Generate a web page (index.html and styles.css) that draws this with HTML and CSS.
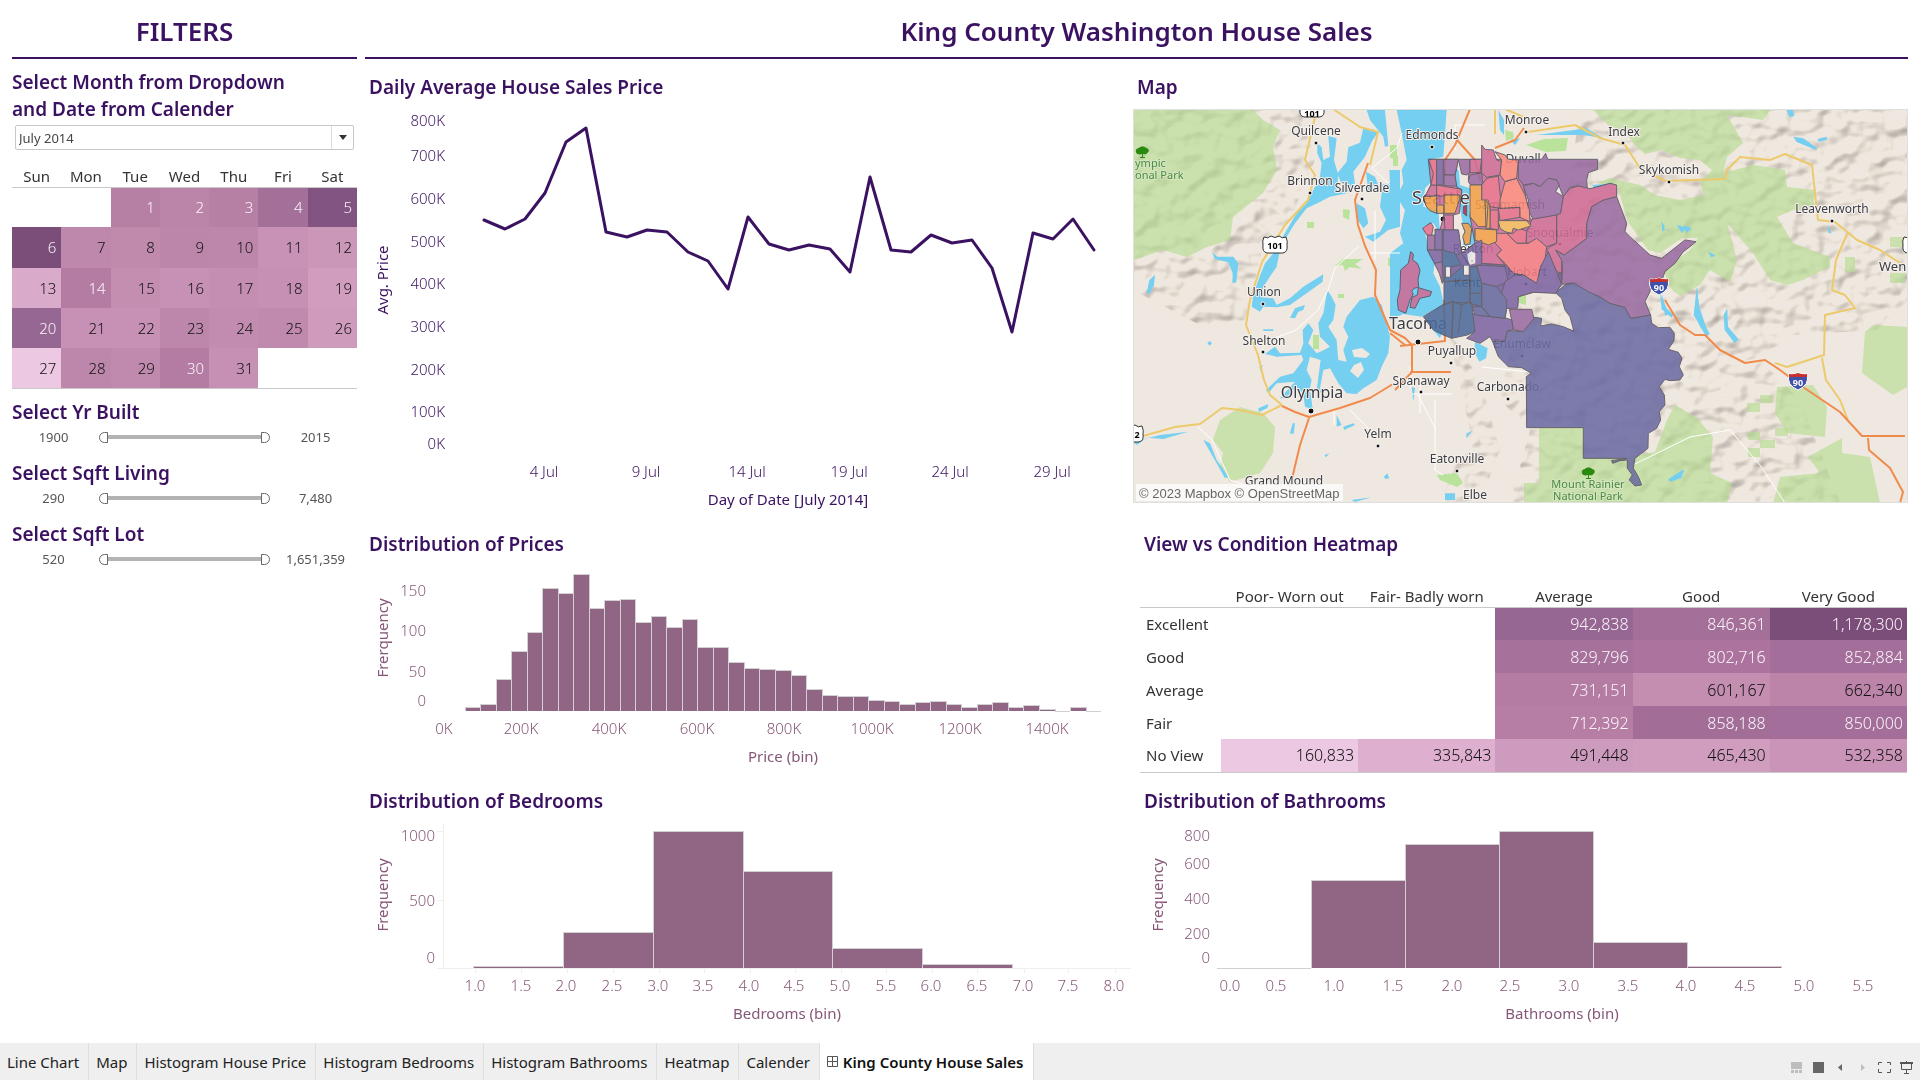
FILE: index.html
```html
<!DOCTYPE html>
<html lang="en">
<head>
<meta charset="utf-8">
<meta name="viewport" content="width=device-width, initial-scale=1">
<title>King County House Sales</title>
<link rel="stylesheet" href="styles.css">
</head>
<body>
<main class="dashboard">
  <aside class="filters">
    <h1 class="heading">FILTERS</h1>
    <label class="filter-title" for="month">Select Month from Dropdown<br>and Date from Calender</label>
    <div class="month-picker">
      <select id="month" class="month-select"><option>July 2014</option></select>
      <span class="month-arrow"><svg width="8" height="5" viewBox="0 0 8 5"><path d="M0 0h8L4 5z" fill="#333"/></svg></span>
    </div>
    <table class="calendar">
      <thead><tr><th>Sun</th><th>Mon</th><th>Tue</th><th>Wed</th><th>Thu</th><th>Fri</th><th>Sat</th></tr></thead>
      <tbody>
        <tr><td></td><td></td><td class="lt" style="background:#b67fa4">1</td><td class="lt" style="background:#bb85a9">2</td><td class="lt" style="background:#b67fa4">3</td><td class="lt" style="background:#a3709a">4</td><td class="lt" style="background:#825482">5</td></tr>
        <tr><td class="lt" style="background:#7b4d79">6</td><td style="background:#be88ac">7</td><td style="background:#c08aad">8</td><td style="background:#bc86aa">9</td><td style="background:#bd87ab">10</td><td style="background:#c892b6">11</td><td style="background:#cb97b9">12</td></tr>
        <tr><td style="background:#daaacb">13</td><td class="lt" style="background:#b47ca2">14</td><td style="background:#c48eb1">15</td><td style="background:#c791b5">16</td><td style="background:#c48eb2">17</td><td style="background:#c690b4">18</td><td style="background:#d09dbf">19</td></tr>
        <tr><td class="lt" style="background:#966793">20</td><td style="background:#c791b5">21</td><td style="background:#c791b5">22</td><td style="background:#bd87ab">23</td><td style="background:#c28cb0">24</td><td style="background:#c08aae">25</td><td style="background:#ce9bbd">26</td></tr>
        <tr><td style="background:#edc8e3">27</td><td style="background:#bd87ab">28</td><td style="background:#c08aae">29</td><td class="lt" style="background:#b47ca2">30</td><td style="background:#c690b4">31</td><td></td><td></td></tr>
      </tbody>
    </table>
    <section class="range">
      <h2 class="filter-title">Select Yr Built</h2>
      <div class="range-row"><span>1900</span><div class="slider"><input class="low" type="range" min="1900" max="2015" value="1900" aria-label="Earliest year built"><input class="high" type="range" min="1900" max="2015" value="2015" aria-label="Latest year built"></div><span>2015</span></div>
    </section>
    <section class="range">
      <h2 class="filter-title">Select Sqft Living</h2>
      <div class="range-row"><span>290</span><div class="slider"><input class="low" type="range" min="290" max="7480" value="290" aria-label="Smallest living area"><input class="high" type="range" min="290" max="7480" value="7480" aria-label="Largest living area"></div><span>7,480</span></div>
    </section>
    <section class="range">
      <h2 class="filter-title">Select Sqft Lot</h2>
      <div class="range-row"><span>520</span><div class="slider"><input class="low" type="range" min="520" max="1651359" value="520" aria-label="Smallest lot"><input class="high" type="range" min="520" max="1651359" value="1651359" aria-label="Largest lot"></div><span>1,651,359</span></div>
    </section>
  </aside>

  <div class="report">
    <h1 class="heading">King County Washington House Sales</h1>
    <div class="panels">
      <section>
        <h2 class="panel-title">Daily Average House Sales Price</h2>
        <svg class="chart line" viewBox="365 109 766 407" role="img" aria-label="Daily average house sales price">
          <g text-anchor="end"><text x="445" y="126">800K</text><text x="445" y="161">700K</text><text x="445" y="204">600K</text><text x="445" y="247">500K</text><text x="445" y="289">400K</text><text x="445" y="332">300K</text><text x="445" y="375">200K</text><text x="445" y="417">100K</text><text x="445" y="449">0K</text></g>
          <g text-anchor="middle"><text x="544" y="477">4 Jul</text><text x="646" y="477">9 Jul</text><text x="747" y="477">14 Jul</text><text x="849" y="477">19 Jul</text><text x="950" y="477">24 Jul</text><text x="1052" y="477">29 Jul</text>
          <text class="axis" x="788" y="505">Day of Date [July 2014]</text>
          <text class="axis" transform="translate(388 280) rotate(-90)">Avg. Price</text></g>
          <polyline fill="none" stroke="#3b1261" stroke-width="3" stroke-linejoin="round" stroke-linecap="round" points="484,220 505,229 525,219 545,193 566,142 586,128 606,232 627,237 647,230 667,232 688,252 708,261 728,289 748,217 769,244 789,250 809,245 830,249 850,272 870,177 891,250 911,252 931,235 952,243 972,240 992,268 1012,332 1033,233 1053,239 1073,219 1094,250"/>
        </svg>
      </section>

      <section>
        <h2 class="panel-title">Map</h2>
        <svg class="map" viewBox="1133 109 775 394" role="img" aria-label="House sales by zip code">
          <defs>
            <filter id="relief" x="0" y="0" width="1" height="1" color-interpolation-filters="sRGB">
              <feTurbulence type="fractalNoise" baseFrequency=".05 .06" numOctaves="2" seed="8" result="n"/>
              <feDiffuseLighting in="n" surfaceScale="6" diffuseConstant="1.2" lighting-color="#fffaf0"><feDistantLight azimuth="235" elevation="60"/></feDiffuseLighting>
              <feComposite in2="SourceAlpha" operator="in"/>
            </filter>
            <g id="tree"><path d="M-6 0c-1-3 2-4 3-4 1-2 6-2 7 0 3 0 4 4 1 5 0 2-3 1-4 1v3h2v1h-5v-1h2v-3c-3 1-6 0-6-2z" fill="#2a8a10"/></g>
            <g id="interstate"><path d="M-9-7q4 1 9-1 5 2 9 1 3 11-9 16-12-5-9-16z" fill="#3f51a8" stroke="#fff"/><path d="M-9-7q4 1 9-1 5 2 9 1v3H-9z" fill="#c9302c"/></g>
            <path id="us" d="M-11-8q4 2 7-1 4 3 8 0 3 3 7 1 2 5 1 8 1 7-4 8H-8q-5-1-4-8-1-4 1-8z" fill="#fff" stroke="#333"/>
          </defs>
          <rect x="1133" y="109" width="775" height="394" fill="#efe8e1"/>

          <g filter="url(#relief)" class="hills">
            <path d="M1133 109H1300L1315 160 1290 220 1262 250 1246 320 1200 325 1133 290z"/>
            <path d="M1580 109H1908V300L1880 330 1790 335 1760 360 1800 400 1840 503H1510L1530 430 1500 400 1520 300 1560 250z"/>
            <path d="M1448 330L1480 380 1500 450 1480 503H1440L1470 430z"/>
          </g>
          <g class="park">
            <path d="M1133 109H1252L1263 120 1280 130 1273 147 1277 170 1263 193 1233 217 1230 240 1207 247 1187 257 1163 250 1143 257 1133 260z"/>
            <path d="M1220 420L1240 407 1263 413 1275 427 1273 453 1260 473 1230 482 1220 467 1223 453 1213 440z"/>
            <path d="M1592 109H1771L1763 120 1727 115 1743 143 1727 157 1723 173 1753 165 1767 167 1785 170 1787 187 1815 190 1813 210 1793 210 1777 217 1793 243 1830 257 1830 267 1803 280 1787 285 1770 280 1753 253 1727 223 1737 260 1730 282 1710 270 1700 285 1680 296 1672 290 1663 270 1690 250 1698 238 1682 238 1660 253 1648 250 1628 222 1620 195 1617 185 1597 183 1610 178 1640 185 1655 195 1680 200 1704 195 1700 182 1712 170 1700 160 1680 158 1662 150 1645 154 1635 145 1625 132 1608 125z"/>
            <path d="M1539 428H1583V458H1623L1655 452 1667 420 1675 405 1697 418 1713 437 1710 473 1732 483 1727 503H1524V483H1539z"/>
            <path d="M1865 332L1873 325 1907 327V387L1893 395 1862 373zM1777 387L1813 385 1827 407 1825 437 1787 433 1775 413zM1808 457L1842 438V453L1870 457 1880 503H1773L1780 477 1820 473z"/>
            <path d="M1747 403h13v9h-13zM1760 395h13v8h-13zM1748 432h12v8h-12zM1760 440h15v8h-15zM1775 428h13v8h-13zM1748 448h12v9h-12zM1890 237h13v10h-13zM1845 257h10v15h-10zM1890 273h15v10h-15z"/>
          </g>
          <g fill="#b9e39b">
            <path d="M1390 145h7v13h-7zM1393 156h5v10h-5zM1343 209l7 1-1 10-6-3zM1307 222h7v6h-7zM1343 259h20l-8 5 7 5-12-2-5 4-2-6-8 1zM1388 258h6v8h-6zM1338 294h6v4h-6zM1313 335h6v14h-6zM1505 130l8 2 1 6-8 3zM1526 145l18-6 24-1-2 13-20 1zM1437 475l20-2 6 10-6 4-17-7zM1518 297l8-2v10l-7-2z"/>
          </g>

          <g fill="#75cff0">
            <g transform="translate(1130 60) scale(.3333)">
              <path d="M595 228L620 235 612 300 625 345 620 395 640 385 622 340 650 305 655 262 690 248 700 205 730 208 742 220 725 245 705 290 670 335 675 370 650 400 600 410 565 428 530 445 495 490 470 530 450 570 440 620 400 680 395 712 430 715 440 735 480 715 520 680 580 643 578 665 530 700 480 735 440 742 400 740 390 755 365 740 370 705 385 660 405 610 430 580 470 510 500 460 530 430 545 400 570 350 575 310 562 280 562 250 575 262 580 300 600 290z"/>
              <path d="M710 150H765L775 258 765 260 760 230 720 180zM708 335L735 350 745 375 780 370 778 330H810V500L775 510 730 545 705 530 750 515 768 480 750 440 755 400 735 390 715 395zM680 430L705 445 715 490 700 505 680 475zM247 577L262 590 310 590 325 610 322 640 318 668 307 668 308 640 295 607 255 598zM50 700L58 660 75 645 72 675 58 702z"/>
              <path d="M650 770L690 720 730 710 755 735 770 790 780 830 775 880 755 920 740 960 700 985 680 1002 650 1000 625 970 600 925 580 930 570 985 575 1000 560 990 572 900 540 890 530 930 545 960 540 985 548 1048 525 1040 520 1000 500 985 465 1015 450 1015 495 965 440 970 415 1000 408 990 450 950 490 940 520 900 515 885 440 890 405 882 435 860 450 880 510 878 520 850 518 810 535 790 550 810 535 850 560 880 582 870 600 860 570 830 565 790 580 760 592 690 605 710 617 735 610 780 595 800 620 840 625 900 650 905 640 870 655 830 640 800z"/>
              <path d="M495 745l30-10-5 15-15 5-10 20-15-2zM400 808h30v5h-30zM232 848l8-5 6 8-8 6zM388 920l10-5-5 22zM385 1045l30-13-3 12-25 12zM480 1120l8-30h7l-4 32zM620 1065l15 30-15 5zM640 1100l30-10 5 5-33 15zM583 1186l15-6-10 12zM762 1250l10-10 6 15-12 2zM665 1320l60-8-50 14z"/>
              <path d="M10 1145L90 1125 175 1115 100 1137 50 1133 20 1155zM220 1140l20 10 20 50 35 50-10 5-25-45z"/>
            </g>
            <g transform="translate(1390 100) scale(.3333)">
              <path d="M20 30H170L160 170 125 178 120 250 105 265 100 320 145 330 150 400 130 370 100 380 110 420 115 450 135 485 130 520 150 560 162 615 95 650 40 642 0 660V460L40 430 30 400 45 330 20 290 40 250 35 210 50 180 35 100z"/>
              <path d="M195 195l12 20 3 40 30 10-2 70 20 60-5 50-25 60-10-60 5-50-15-80-10-50z"/>
              <path d="M100 655l60 30-10 30zM255 725l38 20-5 30-20 10-15-30zM325 30l5 60 12 15v-45zM360 120l30-5-15 20zM440 105l150-20 50 30-60-10zM605 255l70-5-60 15zM815 365l10 25-8 5zM880 375l25 10-15 15zM955 455l20 12-12 5zM920 560l8 60 20 60-15 5-20-50zM815 580l18 65-8 2zM835 1138l45-30-8 25-30 12zM230 1000l18-8-20 22zM165 1180h30v20h-30zM65 860l10 5-5 40z"/>
            </g>
            <g transform="translate(1660 60) scale(.3333)">
              <path d="M380 150h18l5 18-15 3zM400 230l30 5 40 28v8l-60-25zM473 237l27-7v10l-25 5zM112 682l5 75 32 65-10 8-38-65zM202 745l2 55 32 38-12 12-30-40-3-45zM5 485l10 15-7 5zM50 495l30 8-15 15zM143 575l22 10-5 5zM0 700l20 45 20 20-5 8-30-25zM25 1260l20-15 27-15-8 25-38 8zM503 495l12 25-10-2z"/>
            </g>
          </g>
          <path d="M1352 350l10-2 8 6-4 4-12-1zM1354 365l7-3 3 8-6 8-8-7z" fill="#efe8e1"/>

          <g class="roads-minor">
            <path d="M1359 246L1335 268 1328 290 1318 310 1296 330 1275 338M1375 260V211M1370 253H1400M1198 427L1212 440 1230 480 1243 484M1334 410V425M1350 410l20 20M1402 133l-5 15-25 20M1410 367V388M1420 380V413M1435 400V470L1443 475M1455 150v-25h30M1633 465L1690 437 1730 430 1760 465 1785 503M1412 394H1452M1418 395L1436 430M1482 367L1530 372M1372 168L1390 185"/>
          </g>
          <g class="roads-us">
            <path d="M1315 117L1305 160 1315 175 1308 200 1285 225 1262 262 1250 300 1246 325 1258 355 1264 380 1270 395 1282 405M1143 436L1175 427 1200 424 1222 408 1240 410 1262 415 1282 405M1333 109L1360 127 1378 132 1370 165M1495 109v25M1505 109L1526 118M1528 132L1575 125 1600 138 1625 145 1640 168 1665 181 1725 179 1727 170 1740 157 1770 160 1785 154 1812 165 1818 220 1835 222 1857 240 1880 250 1900 263M1847 234L1836 260 1832 290 1845 295 1855 308 1825 315 1824 355 1787 367 1775 363M1822 358L1826 380 1840 400 1848 420"/>
          </g>
          <g class="roads-main">
            <path d="M1368 163L1355 200 1358 225 1365 246 1376 270 1375 295 1390 330 1405 338 1412 345 1412 372 1395 390M1282 406L1295 412 1309 417 1340 408 1370 398 1393 384M1309 418L1300 445 1290 487M1400 346L1445 341 1444 300M1410 372H1451M1470 109L1455 145 1445 160V175M1457 140L1475 160 1480 180M1524 128L1515 140 1495 148M1665 300L1680 325 1695 335 1705 335 1720 350 1745 363 1765 360 1780 370 1800 385 1840 412 1862 436 1905 436M1868 438L1869 450 1890 468 1903 492 1900 503M1390 333l15 12"/>
          </g>

          <g class="places">
            <g class="town" text-anchor="middle">
              <text x="1316" y="135">Quilcene</text><text x="1310" y="185">Brinnon</text><text x="1362" y="192">Silverdale</text><text x="1264" y="296">Union</text><text x="1264" y="345">Shelton</text><text x="1378" y="438">Yelm</text><text x="1284" y="485">Grand Mound</text><text x="1432" y="139">Edmonds</text><text x="1527" y="124">Monroe</text><text x="1624" y="136">Index</text><text x="1669" y="174">Skykomish</text><text x="1832" y="213">Leavenworth</text><text x="1523" y="163">Duvall</text><text x="1510" y="209">Sammamish</text><text x="1560" y="237">Snoqualmie</text><text x="1473" y="253">Renton</text><text x="1527" y="276">Hobart</text><text x="1467" y="287">Kent</text><text x="1522" y="348">Enumclaw</text><text x="1452" y="355">Puyallup</text><text x="1421" y="385">Spanaway</text><text x="1508" y="391">Carbonado</text><text x="1457" y="463">Eatonville</text><text x="1475" y="499">Elbe</text>
            </g>
            <g class="city" text-anchor="middle"><text x="1312" y="398">Olympia</text><text x="1418" y="329">Tacoma</text></g>
            <text class="metro" x="1412" y="204">Seattle</text>
            <text class="wen" x="1879" y="271">Wen</text>
            <g class="park-name"><text x="1588" y="488" text-anchor="middle">Mount Rainier</text><text x="1588" y="500" text-anchor="middle">National Park</text><text x="1135" y="167">ympic</text><text x="1135" y="179">onal Park</text></g>
            <g fill="#111" stroke="#fff"><circle cx="1316" cy="143" r="2"/><circle cx="1310" cy="193" r="2"/><circle cx="1362" cy="199" r="2"/><circle cx="1263" cy="304" r="2"/><circle cx="1263" cy="352" r="2"/><circle cx="1311" cy="411" r="3"/><circle cx="1378" cy="446" r="2"/><circle cx="1432" cy="147" r="2"/><circle cx="1526" cy="132" r="2"/><circle cx="1623" cy="143" r="2"/><circle cx="1669" cy="182" r="2"/><circle cx="1832" cy="221" r="2"/><circle cx="1443" cy="219" r="3"/><circle cx="1472" cy="261" r="2"/><circle cx="1418" cy="342" r="3"/><circle cx="1451" cy="363" r="2"/><circle cx="1421" cy="392" r="2"/><circle cx="1508" cy="399" r="2"/><circle cx="1457" cy="471" r="2"/><circle cx="1526" cy="284" r="2"/><circle cx="1522" cy="356" r="2"/><circle cx="1560" cy="244" r="2"/></g>
          </g>

          <g class="zips" transform="translate(1390 100) scale(.3333)">
            <path fill="#d06f9b" d="M240 178H385L420 355 500 430 515 520 440 545 345 495 275 490 255 430 240 350 255 255 235 240zM115 178H205L195 225 198 258 215 270 208 340 190 345V390H150L162 345 105 290 123 255z"/>
            <path fill="#735f9f" d="M135 388L205 390 215 460 255 430 275 490 345 495 440 545 515 520V553L497 578 430 577 385 590 383 620 350 625 345 655 275 650 240 610 160 545 157 485z"/>
            <g fill="#6c6ba3">
              <path d="M497 578L525 555 550 549 585 560 595 575 628 590 660 610 705 622 722 655 782 645 785 670 805 683 840 682 853 700 852 722 835 748 865 757 876 775 868 800 880 825 870 840 840 842 825 838 808 860 823 885 825 915 808 935 812 960 800 985 775 1000 774 1045 735 1075 730 1105 745 1130 755 1155 735 1158 718 1140 727 1125 712 1105 712 1080 690 1082 668 1090 665 1082 710 1075 580 1075V983H410L409 830 424 820 395 803 355 800 325 770 308 725 345 722 352 692 400 695 430 652 455 655 452 678 485 672 520 680 552 694 540 650 525 630 515 595z"/>
            </g>
            <g fill="#9a6ba2">
              <path d="M497 450L523 465 590 415V370L605 320 640 300 680 290 710 370 705 395 720 410 780 465 815 475 885 420 918 425 900 440 880 455 855 490 825 515 818 535 783 545 780 575 765 605 782 645 722 655 705 622 660 610 628 590 595 575 550 549 515 553 518 490z"/>
              <path d="M385 178H455L467 160 473 178H623V208L595 218 590 240 592 265 565 258 540 262 520 290 500 240 475 235 450 260 430 250 400 255 385 235z"/>
              <path d="M400 258L430 250 450 260 475 235 500 240 508 255 497 275 520 290 512 340 500 345 430 360 415 330V300z"/>
              <path d="M160 178H205L200 205 195 225H162zM205 178H240V218L230 225 215 222zM240 225L275 218 278 255 242 255 235 245z"/>
              <path d="M112 405H135V450H112zM133 490L157 485V550L148 520zM358 628L425 628 432 655 400 695 370 690 365 660zM162 225H195L200 258H162z"/>
            </g>
            <g fill="#d06a96">
              <path d="M600 266L660 250 680 255V290L640 300 605 320 590 370V415L523 465 497 450 515 480V520L500 515 470 450 480 440 500 430V345L512 340 520 290 540 265 565 258z"/>
              <path d="M425 358L500 345V430L470 440 440 425 408 430 410 392 420 375z"/>
              <path d="M275 135L285 148 310 150 320 180 335 185 330 225 290 232 270 215 275 180zM240 178H275V218H240zM123 255H140V288L105 290zM275 420L315 425 335 450 320 465 345 495 275 490zM162 345H190V390H165z"/>
              <path d="M62 455L70 462 68 480 82 490 90 510 84 540 86 562 72 565 65 575 70 582 60 600 47 640 25 630 22 600 30 570 32 510 55 490zM85 563L125 575 120 588 90 595 75 625 60 622 66 592 82 585z"/>
            </g>
            <g fill="#e76f88">
              <path d="M290 235L325 228 332 300 330 325 300 320 275 300V255zM115 178H140V255H123L130 220zM140 255L215 268V285L200 290 140 288zM98 385L122 368 130 380 125 405H110zM325 325L390 322V352L330 362zM350 400L370 400 385 385 410 392 408 430 380 430zM300 330H325V390L300 385z"/>
            </g>
            <g fill="#fb897b">
              <path d="M315 155L345 165 355 178 385 180 380 235 345 245 330 225 335 180zM345 245L380 235 405 285 418 330 420 365 390 352V322L330 325V300z"/>
              <path fill="#f37c84" d="M320 400L350 400 380 430 415 430 440 415 470 440 465 480 452 500 450 545 440 550 400 525 370 520 345 490 320 465 335 450 316 430z"/>
            </g>
            <g fill="#f3a048">
              <path d="M100 290L140 288V340L120 332 108 318zM162 285H208V300L195 340H162zM240 255H275V300L295 300 290 380 265 380 240 350zM215 370L235 370 245 385 240 432 225 435 218 410 225 395zM255 385L320 390V425L295 435 255 420zM285 300L300 315V385H288zM140 315H162V340H140z"/>
              <path d="M325 362H410L423 378 385 390 370 385 365 400 345 395 330 385z" fill="#f4ba5e"/>
              <path d="M220 320L230 315V348L220 340z" fill="#c22c4a"/>
            </g>
            <g fill="#7d64a2">
              <path d="M140 178H160V255H140zM160 390H205L215 460 195 465 160 450zM215 460L255 430 275 420V495L240 500zM260 495L345 500 355 545 320 560 275 550zM112 450H157V485L133 490zM135 388H157V450H135z"/>
              <path d="M335 580L345 545 375 525 400 525 440 550 452 500 475 455 500 515 515 553 497 580 430 577 385 590 383 625 350 625zM245 640L300 650 350 655 365 660 370 690 352 692 345 722 308 725 300 710 270 730 230 715 255 695z"/>
            </g>
            <g fill="#66699f"><path d="M275 550L320 560 350 600V625L345 655 300 650 275 620zM247 620L275 620 300 650 255 645z"/></g>
            <g fill="#4b6a9a">
              <path d="M157 450L195 460 215 495 182 500V530H165V500L157 495zM165 530H182L222 495V525H238L240 540 162 545zM162 545L240 540V605L215 615 190 605 162 615zM100 650L162 612 190 605 185 715 160 705 130 690zM190 608H245L255 695 232 705 185 715zM240 500H260L275 550V620L240 610zM215 615L205 700M240 580H275"/>
            </g>
            <path fill="#efe8e1" stroke="none" d="M168 502h12v28h-12zM222 497h14v27h-14zM232 462l12-8 12 6v30l-16 4-6-14z"/>
          </g>

          <g><use href="#us" x="1275" y="245"/><use href="#us" x="1312" y="109"/><use href="#us" x="1131" y="434"/><use href="#us" x="1915" y="245"/><text class="shield" x="1275" y="249" text-anchor="middle">101</text><text class="shield" x="1312" y="117" text-anchor="middle">101</text><text class="shield" x="1137" y="438" text-anchor="middle">2</text></g>
          <use href="#interstate" x="1659" y="286"/><use href="#interstate" x="1798" y="381"/>
          <g class="shield" fill="#fff" text-anchor="middle"><text x="1659" y="291">90</text><text x="1798" y="386">90</text></g>
          <use href="#tree" x="1142" y="152"/><use href="#tree" x="1588" y="473"/>
          <rect x="1136" y="484" width="207" height="17" fill="#fff" fill-opacity=".75"/>
          <text class="credit" x="1139" y="498">© 2023 Mapbox © OpenStreetMap</text>
          <path d="M1133.500 109.500H1907.500V502.500H1133.500z" fill="none" stroke="#dfdfdd"/>
        </svg>
      </section>

      <section>
        <h2 class="panel-title">Distribution of Prices</h2>
        <svg class="chart" viewBox="365 566 766 207" role="img" aria-label="Distribution of prices">
          <g text-anchor="end"><text x="426" y="596">150</text><text x="426" y="636">100</text><text x="426" y="677">50</text><text x="426" y="706">0</text></g>
          <g text-anchor="middle"><text x="444" y="734">0K</text><text x="521" y="734">200K</text><text x="609" y="734">400K</text><text x="697" y="734">600K</text><text x="784" y="734">800K</text><text x="872" y="734">1000K</text><text x="960" y="734">1200K</text><text x="1047" y="734">1400K</text>
          <text class="axis" x="783" y="762">Price (bin)</text><text class="axis" transform="translate(388 638) rotate(-90)">Frerquency</text></g>
          <path class="bars" d="M465 711V707H480V711M480 711V704H496V711M496 711V679H511V711M511 711V651H527V711M527 711V632H542V711M542 711V588H558V711M558 711V593H573V711M573 711V574H589V711M589 711V608H604V711M604 711V600H620V711M620 711V599H635V711M635 711V622H651V711M651 711V616H666V711M666 711V627H682V711M682 711V619H697V711M697 711V647H713V711M713 711V647H728V711M728 711V662H744V711M744 711V668H759V711M759 711V669H775V711M775 711V670H791V711M791 711V675H806V711M806 711V689H822V711M822 711V695H837V711M837 711V696H853V711M853 711V696H868V711M868 711V700H884V711M884 711V701H899V711M899 711V704H915V711M915 711V702H930V711M930 711V701H946V711M946 711V704H961V711M961 711V707H977V711M977 711V704H992V711M992 711V702H1008V711M1008 711V707H1023V711M1023 711V705H1039V711M1039 711V709H1055V711M1055 711H1070M1070 711V707H1086V711M1086 711H1101"/>
        </svg>
      </section>

      <section>
        <h2 class="panel-title inset">View vs Condition Heatmap</h2>
        <table class="heatmap">
          <thead><tr><th></th><th>Poor- Worn out</th><th>Fair- Badly worn</th><th>Average</th><th>Good</th><th>Very Good</th></tr></thead>
          <tbody>
            <tr><th>Excellent</th><td></td><td></td><td class="lt" style="background:#966793">942,838</td><td class="lt" style="background:#a46f99">846,361</td><td class="lt" style="background:#7b4d79">1,178,300</td></tr>
            <tr><th>Good</th><td></td><td></td><td class="lt" style="background:#a6729b">829,796</td><td class="lt" style="background:#ab739d">802,716</td><td class="lt" style="background:#a36e99">852,884</td></tr>
            <tr><th>Average</th><td></td><td></td><td class="lt" style="background:#b47ca2">731,151</td><td style="background:#c48eb1">601,167</td><td style="background:#bb84a8">662,340</td></tr>
            <tr><th>Fair</th><td></td><td></td><td class="lt" style="background:#b67ea4">712,392</td><td class="lt" style="background:#a26e98">858,188</td><td class="lt" style="background:#a36e99">850,000</td></tr>
            <tr><th>No View</th><td style="background:#edc8e3">160,833</td><td style="background:#dfafcf">335,843</td><td style="background:#cd9bbd">491,448</td><td style="background:#d09dbf">465,430</td><td style="background:#c994b7">532,358</td></tr>
          </tbody>
        </table>
      </section>

      <section>
        <h2 class="panel-title">Distribution of Bedrooms</h2>
        <svg class="chart" viewBox="365 823 766 220" role="img" aria-label="Distribution of bedrooms">
          <path class="rule" d="M443 824V968M437 968H1131M437 831H443M437 900H443M475 968V973M521 968V973M567 968V973M613 968V973M659 968V973M704 968V973M750 968V973M795 968V973M841 968V973M886 968V973M932 968V973M977 968V973M1024 968V973M1068 968V973M1115 968V973"/>
          <g text-anchor="end"><text x="435" y="841">1000</text><text x="435" y="906">500</text><text x="435" y="963">0</text></g>
          <g text-anchor="middle"><text x="475" y="991">1.0</text><text x="521" y="991">1.5</text><text x="566" y="991">2.0</text><text x="612" y="991">2.5</text><text x="658" y="991">3.0</text><text x="703" y="991">3.5</text><text x="749" y="991">4.0</text><text x="794" y="991">4.5</text><text x="840" y="991">5.0</text><text x="886" y="991">5.5</text><text x="931" y="991">6.0</text><text x="977" y="991">6.5</text><text x="1023" y="991">7.0</text><text x="1068" y="991">7.5</text><text x="1114" y="991">8.0</text>
          <text class="axis" x="787" y="1019">Bedrooms (bin)</text><text class="axis" transform="translate(388 895) rotate(-90)">Frequency</text></g>
          <path class="bars" d="M473 968V966H563V968M563 968V932H653V968M653 968V831H743V968M743 968V871H832V968M832 968V948H922V968M922 968V964H1012V968"/>
        </svg>
      </section>

      <section>
        <h2 class="panel-title inset">Distribution of Bathrooms</h2>
        <svg class="chart" viewBox="1133 823 775 220" role="img" aria-label="Distribution of bathrooms">
          <g text-anchor="end"><text x="1210" y="841">800</text><text x="1210" y="869">600</text><text x="1210" y="904">400</text><text x="1210" y="939">200</text><text x="1210" y="963">0</text></g>
          <g text-anchor="middle"><text x="1230" y="991">0.0</text><text x="1276" y="991">0.5</text><text x="1334" y="991">1.0</text><text x="1393" y="991">1.5</text><text x="1452" y="991">2.0</text><text x="1510" y="991">2.5</text><text x="1569" y="991">3.0</text><text x="1628" y="991">3.5</text><text x="1686" y="991">4.0</text><text x="1745" y="991">4.5</text><text x="1804" y="991">5.0</text><text x="1863" y="991">5.5</text>
          <text class="axis" x="1562" y="1019">Bathrooms (bin)</text><text class="axis" transform="translate(1163 895) rotate(-90)">Frequency</text></g>
          <path class="bars" d="M1217 968H1311M1311 968V880H1405V968M1405 968V844H1499V968M1499 968V831H1593V968M1593 968V942H1687V968M1687 968V966H1781V968"/>
        </svg>
      </section>
    </div>
  </div>
</main>

<nav class="tabs">
  <button>Line Chart</button><button>Map</button><button>Histogram House Price</button><button>Histogram Bedrooms</button><button>Histogram Bathrooms</button><button>Heatmap</button><button>Calender</button>
  <button class="active"><svg width="11" height="11" viewBox="0 0 11 11"><path d="M.5.5h10v10H.5zM5.500.5v10M.5 5.500h10" fill="none" stroke="#555"/></svg>King County House Sales</button>
  <div class="tools">
    <button aria-label="Show filmstrip"><svg viewBox="0 0 13 13"><path d="M1 1h11v7H1zM1 9h3v3H1zM5 9h3v3H5zM9 9h3v3H9z" fill="#bdbdbd"/></svg></button>
    <button aria-label="Show tabs"><svg viewBox="0 0 13 13"><path d="M1 1h11v11H1z" fill="#666"/></svg></button>
    <button aria-label="Previous"><svg viewBox="0 0 13 13"><path d="M8 3v7L4 6.500z" fill="#666"/></svg></button>
    <button aria-label="Next"><svg viewBox="0 0 13 13"><path d="M5 3v7l4-3.500z" fill="#bdbdbd"/></svg></button>
    <button aria-label="Full screen"><svg viewBox="0 0 13 13"><path d="M.5 4V1.500H4M9 1.500h3.500V4M12.500 8v3.500H9M4 11.500H.5V8" fill="none" stroke="#555"/></svg></button>
    <button aria-label="Presentation mode"><svg viewBox="0 0 13 13"><path d="M0 1h13v2H0zM6 0h1v1H6zM4 12h5v1H4z" fill="#555"/><path d="M1.500 3v5.500h10V3M6.500 9v3" fill="none" stroke="#555"/></svg></button>
  </div>
</nav>
</body>
</html>
```
FILE: styles.css
```css
* { box-sizing: border-box; }

body {
  margin: 0;
  min-height: 100vh;
  display: flex;
  flex-direction: column;
  background: #fff;
  color: #333;
  font-family: "Noto Sans", "Open Sans", sans-serif;
  font-size: 15px;
}

button, select { font: inherit; color: inherit; }

.dashboard {
  flex: 1;
  display: grid;
  grid-template-columns: minmax(0, 345fr) minmax(0, 1543fr);
  gap: 8px;
  padding: 0 12px;
}

.heading {
  margin: 0;
  padding: 16px 0 11px;
  border-bottom: 2px solid #3b1261;
  color: #3b1261;
  font-size: 26px;
  font-weight: 600;
  line-height: 30px;
  text-align: center;
}

/* Filters column */
.filter-title {
  display: block;
  margin: 0;
  color: #3b1261;
  font-size: 19px;
  font-weight: 600;
  line-height: 27px;
}
label.filter-title { padding: 10px 0 2px; }

.month-picker { display: grid; margin: 0 3px; }
.month-select, .month-arrow { grid-area: 1 / 1; }
.month-select {
  appearance: none;
  width: 100%;
  height: 25px;
  padding: 0 3px;
  border: 1px solid #c8c8c8;
  border-radius: 2px;
  background: #fff;
  color: #444;
  font-size: 13px;
}
.month-arrow {
  justify-self: end;
  display: flex;
  align-items: center;
  justify-content: center;
  width: 23px;
  height: 23px;
  margin: 1px 0;
  border-left: 1px solid #dcdcdc;
  pointer-events: none;
}

table { border-collapse: collapse; table-layout: fixed; }
th { font-weight: 400; padding: 0; }
td { padding: 0 4px 0 0; color: #111; font-weight: 300; text-align: right; }
.lt { color: #fbf4fa; }

.calendar {
  width: 100%;
  height: 223px;
  margin-top: 16px;
  border-bottom: 1px solid #c8c8c8;
}
.calendar thead { border-bottom: 1px solid #c8c8c8; }
.calendar thead th { height: 21px; line-height: 20px; }
.calendar td { height: 40px; padding-right: 5px; }

.range { padding-top: 10px; }
.range-row {
  display: grid;
  grid-template-columns: 83px minmax(0, 1fr) 83px;
  gap: 4px;
  align-items: center;
  height: 22px;
  margin-bottom: 2px;
  color: #555;
  font-size: 13px;
  text-align: center;
}
.slider { display: grid; align-items: center; }
.slider::before {
  content: "";
  grid-area: 1 / 1;
  height: 4px;
  margin: 0 9px;
  background: #b3b3b3;
}
.slider input {
  grid-area: 1 / 1;
  appearance: none;
  width: 100%;
  height: 11px;
  margin: 0;
  background: none;
  pointer-events: none;
}
.slider input::-webkit-slider-thumb {
  appearance: none;
  width: 9px;
  height: 11px;
  border: 1px solid #666;
  background: #fff;
  pointer-events: auto;
}
.slider .low::-webkit-slider-thumb { border-radius: 6px 0 0 6px; }
.slider .high::-webkit-slider-thumb { border-radius: 0 6px 6px 0; }

/* Report panels */
.panels {
  display: grid;
  grid-template-columns: minmax(0, 766fr) minmax(0, 775fr);
  column-gap: 2px;
}
.panel-title {
  margin: 0;
  padding: 14px 4px 8px;
  color: #3b1261;
  font-size: 19px;
  font-weight: 600;
  line-height: 28px;
}
.panel-title.inset { padding-left: 11px; }

.chart, .map { display: block; width: 100%; height: auto; }
.chart text { fill: #865778; font-size: 15px; font-weight: 300; }
.chart .axis { font-weight: 400; }
.chart.line text { fill: #3b1261; }
.bars { fill: #916684; stroke: #d3d0d3; shape-rendering: crispEdges; }
.rule { fill: none; stroke: #efefef; shape-rendering: crispEdges; }

.heatmap {
  width: calc(100% - 8px);
  margin-left: 7px;
  border-bottom: 1px solid #c8c8c8;
}
.heatmap thead { border-bottom: 1px solid #c8c8c8; }
.heatmap thead th { height: 41px; padding-bottom: 1px; line-height: 20px; vertical-align: bottom; }
.heatmap thead th:first-child { width: 81px; }
.heatmap tbody th { padding-left: 6px; text-align: left; }
.heatmap td { height: 33px; font-size: 16px; }

/* Map layers */
.park { fill: #b5dc90; fill-opacity: .65; }
.hills { mix-blend-mode: multiply; opacity: .4; }
.roads-minor, .roads-us, .roads-main { fill: none; stroke-width: 2; stroke-linejoin: round; }
.roads-minor { stroke: #fff; stroke-width: 1; }
.roads-us { stroke: #ecca6c; }
.roads-main { stroke: #f08b4b; }
.places text { fill: #3a3d45; stroke: #f6f1ec; stroke-width: 2px; paint-order: stroke; stroke-linejoin: round; }
.town { font-size: 12px; }
.city { font-size: 16px; }
.metro { font-size: 18px; }
.wen { font-size: 13px; }
.places .park-name text { fill: #4c8a3c; stroke: #d5e6c4; font-size: 11px; }
.zips { opacity: .87; stroke: #55505c; stroke-width: 3px; stroke-linejoin: round; }
.shield { font-size: 9px; font-weight: 700; }
.credit { fill: #666; font-family: "Liberation Sans", sans-serif; font-size: 13px; }

/* Sheet tabs */
.tabs {
  display: flex;
  height: 37px;
  background: #efefef;
  color: #222;
}
.tabs > button {
  padding: 0 9px 0 7px;
  border: 0;
  border-right: 1px solid #dedede;
  background: none;
  white-space: nowrap;
}
.tabs > .active {
  display: flex;
  align-items: center;
  gap: 5px;
  background: #fff;
  color: #111;
  font-weight: 600;
}
.tools {
  display: flex;
  gap: 9px;
  margin: 18px 7px 0 auto;
}
.tools button { width: 13px; height: 13px; padding: 0; border: 0; background: none; }
.tools svg { display: block; width: 13px; height: 13px; }
```
